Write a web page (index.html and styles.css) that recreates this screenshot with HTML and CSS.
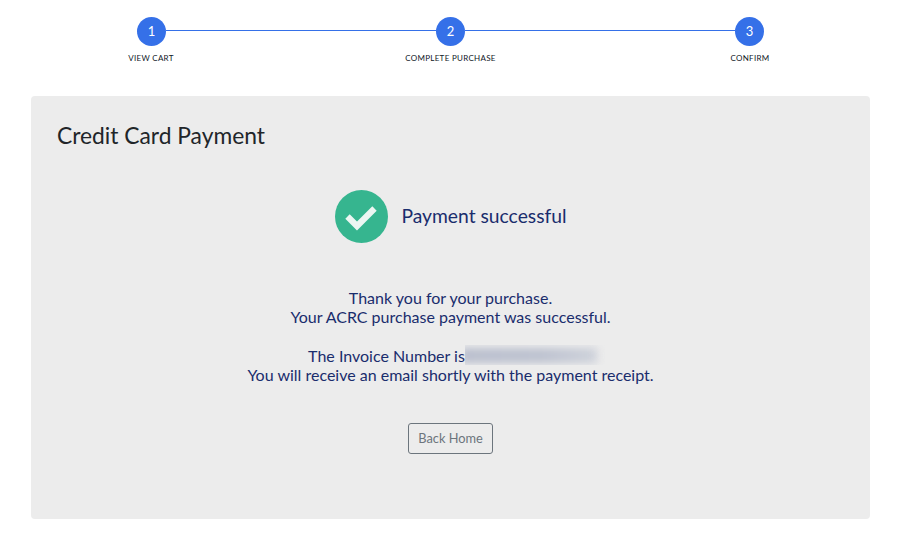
FILE: index.html
```html
<!DOCTYPE html>
<html lang="en">
<head>
<meta charset="utf-8">
<title>Credit Card Payment</title>
<link rel="stylesheet" href="styles.css">
</head>
<body>
<div class="stepper">
  <div class="track">
    <span class="dot">1</span><span class="line"></span>
    <span class="dot">2</span><span class="line"></span>
    <span class="dot">3</span>
  </div>
  <div class="labels">
    <span class="label">VIEW CART</span>
    <span class="label">COMPLETE PURCHASE</span>
    <span class="label">CONFIRM</span>
  </div>
</div>
<main class="panel">
  <h1 class="title">Credit Card Payment</h1>
  <div class="status">
    <svg class="check" viewBox="0 0 53 53" aria-hidden="true">
      <circle cx="26.5" cy="26.5" r="26.5" fill="#36b58f"/>
      <path d="M12.5 26.5 L22 36 L39.5 18.5" fill="none" stroke="#ecf6f2" stroke-width="6.2"/>
    </svg>
    <span class="status-text">Payment successful</span>
  </div>
  <p class="message">Thank you for your purchase.<br>Your ACRC purchase payment was successful.</p>
  <p class="message invoice-block">The Invoice Number is<span class="redacted"><span class="smear"></span></span><br>You will receive an email shortly with the payment receipt.</p>
  <div class="actions"><a class="button" href="#">Back Home</a></div>
</main>
</body>
</html>
```
FILE: styles.css
```css
* { box-sizing: border-box; }
html, body { margin: 0; padding: 0; }
body {
  background: #fff;
  font-family: Lato, "Noto Sans", sans-serif;
  font-size: 16px;
  line-height: 19px;
  color: #1a2d6d;
}
.stepper { padding: 17px 0 0; height: 96px; }
.track {
  display: flex;
  align-items: flex-start;
  margin: 0 141px 0 137px;
}
.dot {
  flex: none;
  width: 29px;
  height: 29px;
  border-radius: 50%;
  background: #3570e8;
  color: #fff;
  font-size: 13px;
  font-weight: 400;
  line-height: 29px;
  text-align: center;
}
.line { flex: 1; height: 1px; margin-top: 13px; background: #3570e8; }
.labels {
  display: flex;
  justify-content: space-between;
  margin: 7px 95px 0 91px;
}
.label {
  width: 120px;
  text-align: center;
  font-size: 8px;
  line-height: 10px;
  letter-spacing: 0.3px;
  color: #111827;
}
.panel {
  width: 839px;
  height: 423px;
  margin-left: 31px;
  padding: 25px 26px 0;
  background: #ececec;
  border-radius: 4px;
}
.title {
  margin: 0;
  font-size: 22.8px;
  font-weight: 400;
  line-height: 29px;
  color: #212529;
}
.status {
  display: flex;
  justify-content: center;
  align-items: center;
  gap: 13px;
  margin-top: 40px;
  padding-left: 1px;
}
.check { width: 53px; height: 53px; flex: none; }
.status-text { font-size: 19.3px; line-height: 24px; padding-bottom: 2px; }
.message { margin: 0; text-align: center; }
.status + .message { margin-top: 45px; }
.invoice-block { margin-top: 20px; }
.redacted {
  display: inline-block;
  width: 128px;
  height: 19px;
  vertical-align: top;
  clip-path: inset(-1px -12px 0 0);
}
.smear {
  display: block;
  width: 137px;
  height: 15px;
  margin: 2px 0 0 -5px;
  background: linear-gradient(90deg, #b9becd 0%, #bcc1cf 60%, #cdd1da 100%);
  filter: blur(4px);
}
.actions { display: flex; justify-content: center; margin-top: 39px; }
.button {
  display: block;
  height: 31px;
  padding: 0 9px;
  border: 1px solid #6c757d;
  border-radius: 3px;
  color: #6c757d;
  font-size: 12.8px;
  line-height: 28px;
  text-decoration: none;
}
```
